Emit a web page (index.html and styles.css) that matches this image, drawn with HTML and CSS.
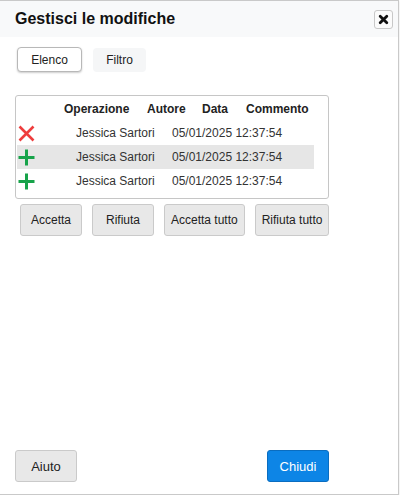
FILE: index.html
```html
<!DOCTYPE html>
<html lang="it">
<head>
<meta charset="utf-8">
<title>Gestisci le modifiche</title>
<link rel="stylesheet" href="styles.css">
</head>
<body>
<div class="dialog">
  <div class="titlebar">
    <span class="title">Gestisci le modifiche</span>
    <button class="close" aria-label="Chiudi">
      <svg width="11" height="11" viewBox="0 0 11 11"><path d="M2.2 2.2 L8.8 8.8 M8.8 2.2 L2.2 8.8" stroke="#111" stroke-width="2.8" stroke-linecap="round"/></svg>
    </button>
  </div>
  <div class="content">
    <div class="tabs">
      <button class="tab active">Elenco</button>
      <button class="tab">Filtro</button>
    </div>
    <div class="list">
      <div class="head">
        <span></span>
        <span>Operazione</span>
        <span>Autore</span>
        <span>Data</span>
        <span>Commento</span>
      </div>
      <div class="row">
        <span class="icon"><svg width="17" height="17" viewBox="0 0 17 17"><path d="M1.5 1.5 L15.5 15.5 M15.5 1.5 L1.5 15.5" stroke="#ee3d3d" stroke-width="2.6"/></svg></span>
        <span>Jessica Sartori</span>
        <span>05/01/2025 12:37:54</span>
      </div>
      <div class="row selected">
        <span class="icon"><svg width="17" height="17" viewBox="0 0 17 17"><path d="M8.5 0.5 V16.5 M0.5 8.5 H16.5" stroke="#17a34a" stroke-width="3"/></svg></span>
        <span>Jessica Sartori</span>
        <span>05/01/2025 12:37:54</span>
      </div>
      <div class="row">
        <span class="icon"><svg width="17" height="17" viewBox="0 0 17 17"><path d="M8.5 0.5 V16.5 M0.5 8.5 H16.5" stroke="#17a34a" stroke-width="3"/></svg></span>
        <span>Jessica Sartori</span>
        <span>05/01/2025 12:37:54</span>
      </div>
    </div>
    <div class="actions">
      <button class="btn">Accetta</button>
      <button class="btn">Rifiuta</button>
      <button class="btn">Accetta tutto</button>
      <button class="btn">Rifiuta tutto</button>
    </div>
  </div>
  <div class="footer">
    <button class="btn big">Aiuto</button>
    <button class="btn big primary">Chiudi</button>
  </div>
</div>
</body>
</html>
```
FILE: styles.css
```css
* { box-sizing: border-box; }
html, body { margin: 0; padding: 0; background: #fff; }
body { font-family: "Liberation Sans", Arial, sans-serif; font-size: 12px; color: #222; }

.dialog {
  width: 399px;
  height: 495px;
  border: 1px solid #c9c9c9;
  border-left: none;
  box-shadow: 0 1px 2px rgba(0,0,0,0.12);
  display: flex;
  flex-direction: column;
  background: #fff;
}

.titlebar {
  height: 36px;
  background: #f8f9fa;
  display: flex;
  align-items: center;
  justify-content: space-between;
  padding: 0 5px 0 15px;
}
.title { font-size: 16px; font-weight: bold; color: #111; }
.close {
  width: 19px; height: 19px;
  padding: 0; margin: 0;
  border: 1px solid #c8c8c8;
  border-radius: 3px;
  background: #fbfbfb;
  display: flex; align-items: center; justify-content: center;
}

button { font-family: inherit; font-size: 12px; color: #222; cursor: pointer; }

.content { padding: 10px 15px 0; }

.tabs { display: flex; gap: 11px; padding-left: 2px; }
.tab {
  width: 53px;
  height: 24px;
  padding: 0;
  border: 1px solid transparent;
  border-radius: 4px;
  background: #f5f6f7;
  margin-top: 1px;
}
.tab.active {
  width: 65px;
  background: #fff;
  border-color: #b8b8b8;
  box-shadow: 0 1px 2px rgba(0,0,0,0.2);
  margin-top: 0;
  height: 25px;
}

.list {
  margin-top: 23px;
  width: 314px;
  height: 104px;
  border: 1px solid #c6c6c6;
  border-radius: 3px;
  padding: 0 14px 0 1px;
}
.head {
  display: grid;
  grid-template-columns: 47px 83px 55px 44px auto;
  height: 25px;
  align-items: center;
  font-weight: bold;
  color: #222;
}
.row {
  display: grid;
  grid-template-columns: 59px 96px auto;
  height: 24px;
  align-items: center;
  color: #333;
}
.row.selected { background: #e6e6e6; }
.icon { display: flex; padding-left: 1px; }

.actions { display: flex; gap: 10px; margin-top: 5px; padding-left: 5px; }
.btn {
  height: 32px;
  min-width: 62px;
  padding: 0 6px;
  background: #e8e8e8;
  border: 1px solid #cacaca;
  border-radius: 3px;
}

.footer {
  margin-top: auto;
  display: flex;
  padding: 0 0 12px 15px;
  gap: 190px;
}
.btn.primary {
  background: #0d85e6;
  border-color: #0a6dc0;
  color: #fff;
}
.btn.big { font-size: 13px; }
```
